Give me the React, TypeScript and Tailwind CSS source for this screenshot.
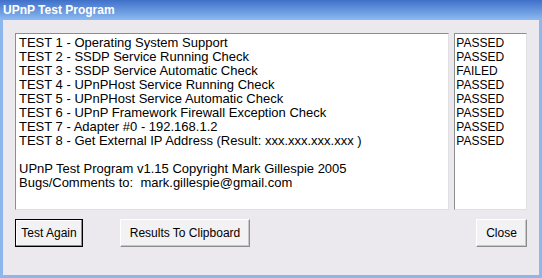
import React from 'react';

const tests = [
  'TEST 1 - Operating System Support',
  'TEST 2 - SSDP Service Running Check',
  'TEST 3 - SSDP Service Automatic Check',
  'TEST 4 - UPnPHost Service Running Check',
  'TEST 5 - UPnPHost Service Automatic Check',
  'TEST 6 - UPnP Framework Firewall Exception Check',
  'TEST 7 - Adapter #0 - 192.168.1.2',
  'TEST 8 - Get External IP Address (Result: xxx.xxx.xxx.xxx )',
];

const results = ['PASSED', 'PASSED', 'FAILED', 'PASSED', 'PASSED', 'PASSED', 'PASSED', 'PASSED'];

const Button = ({ label, focused, className }: { label: string; focused?: boolean; className: string }) => (
  <div
    className={`h-[28px] flex items-center justify-center bg-[#f2f1f3] border text-[12px] text-black ${
      focused
        ? 'border-black shadow-[inset_-1px_-1px_0_#8e8e8e,inset_1px_1px_0_#fff]'
        : 'border-t-white border-l-white border-b-[#8c8c8c] border-r-[#8c8c8c] shadow-[inset_-1px_-1px_0_#c8c6c9]'
    } ${className}`}
  >
    {label}
  </div>
);

export default function App() {
  return (
    <div
      className="w-[542px] h-[278px] flex flex-col bg-[#8cb6ec] overflow-hidden"
      style={{ fontFamily: '"Liberation Sans", Arial, sans-serif' }}
    >
      <div className="h-[20px] shrink-0 flex items-center pl-[3px] bg-gradient-to-b from-[#3f70c9] to-[#8dbaf0]">
        <span className="text-white font-bold text-[12px]">UPnP Test Program</span>
      </div>
      <div className="flex-1 mx-[3px] mb-[3px] bg-[#ebe9ed] flex flex-col pt-[13px] px-[12px]">
        <div className="flex gap-[5px] h-[177px]">
          <div className="w-[436px] bg-white border border-t-[#8e8e8e] border-l-[#8e8e8e] border-b-[#e0dfe2] border-r-[#e0dfe2] pt-[2px] pl-[3px] text-[13px] leading-[14px] text-black">
            {tests.map((t) => (
              <div key={t} className="whitespace-pre">{t}</div>
            ))}
            <div className="h-[14px]" />
            <div>UPnP Test Program v1.15 Copyright Mark Gillespie 2005</div>
            <div className="whitespace-pre">Bugs/Comments to:  mark.gillespie@gmail.com</div>
          </div>
          <div className="w-[73px] bg-white border border-t-[#8e8e8e] border-l-[#8e8e8e] border-b-[#e0dfe2] border-r-[#e0dfe2] pt-[2px] pl-[1px] text-[12px] leading-[14px] text-black">
            {results.map((r, i) => (
              <div key={i}>{r}</div>
            ))}
          </div>
        </div>
        <div className="flex mt-[9px]">
          <Button label="Test Again" focused className="w-[68px]" />
          <Button label="Results To Clipboard" className="w-[130px] ml-[37px]" />
          <Button label="Close" className="w-[51px] ml-auto" />
        </div>
      </div>
    </div>
  );
}
